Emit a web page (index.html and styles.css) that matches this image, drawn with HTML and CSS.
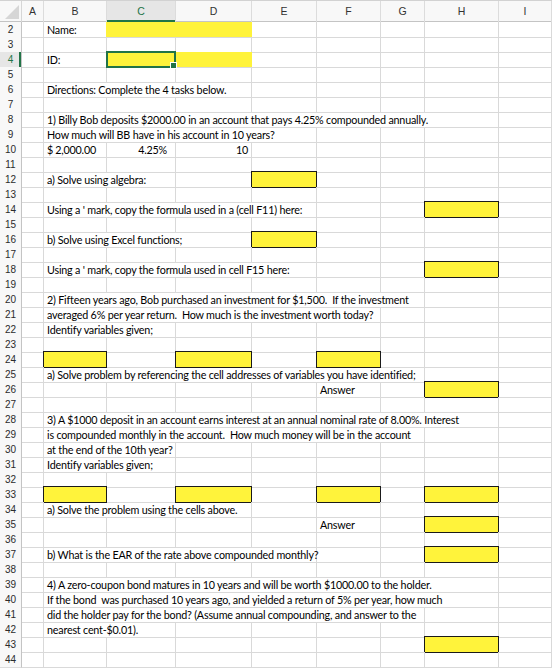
FILE: index.html
```html
<!DOCTYPE html>
<html>
<head>
<meta charset="utf-8">
<title>Sheet</title>
<link rel="stylesheet" href="styles.css">
</head>
<body>
<div class="sheet">
  <div class="colhead">
    <div class="corner"><svg width="22" height="21" viewBox="0 0 22 21"><polygon points="5,18 19,18 19,4" fill="#d6d6d6"/></svg></div>
    <div class="ch">A</div><div class="ch">B</div><div class="ch sel">C</div><div class="ch">D</div><div class="ch">E</div><div class="ch">F</div><div class="ch">G</div><div class="ch">H</div><div class="ch">I</div>
  </div>

  <div class="row"><div class="rh">2</div><div class="c"></div><div class="c t">Name:</div><div class="c fill s2"></div><div class="c"></div><div class="c"></div><div class="c"></div><div class="c"></div><div class="c"></div></div>
  <div class="row"><div class="rh">3</div><div class="c"></div><div class="c"></div><div class="c"></div><div class="c"></div><div class="c"></div><div class="c"></div><div class="c"></div><div class="c"></div><div class="c"></div></div>
  <div class="row"><div class="rh sel">4</div><div class="c"></div><div class="c t">ID:</div><div class="c fill active"></div><div class="c fill"></div><div class="c"></div><div class="c"></div><div class="c"></div><div class="c"></div><div class="c"></div></div>
  <div class="row"><div class="rh">5</div><div class="c"></div><div class="c"></div><div class="c"></div><div class="c"></div><div class="c"></div><div class="c"></div><div class="c"></div><div class="c"></div><div class="c"></div></div>
  <div class="row"><div class="rh">6</div><div class="c"></div><div class="c t s3">Directions: Complete the 4 tasks below.</div><div class="c"></div><div class="c"></div><div class="c"></div><div class="c"></div><div class="c"></div></div>
  <div class="row"><div class="rh">7</div><div class="c"></div><div class="c"></div><div class="c"></div><div class="c"></div><div class="c"></div><div class="c"></div><div class="c"></div><div class="c"></div><div class="c"></div></div>
  <div class="row"><div class="rh">8</div><div class="c"></div><div class="c t s7">1) Billy Bob deposits $2000.00 in an account that pays 4.25% compounded annually.</div><div class="c"></div></div>
  <div class="row"><div class="rh">9</div><div class="c"></div><div class="c t s4">How much will BB have in his account in 10 years?</div><div class="c"></div><div class="c"></div><div class="c"></div><div class="c"></div></div>
  <div class="row"><div class="rh">10</div><div class="c"></div><div class="c t acct"><span>$</span><span>2,000.00</span></div><div class="c t num pct">4.25%</div><div class="c t num">10</div><div class="c"></div><div class="c"></div><div class="c"></div><div class="c"></div><div class="c"></div></div>
  <div class="row"><div class="rh">11</div><div class="c"></div><div class="c"></div><div class="c"></div><div class="c"></div><div class="c"></div><div class="c"></div><div class="c"></div><div class="c"></div><div class="c"></div></div>
  <div class="row"><div class="rh">12</div><div class="c"></div><div class="c t s2">a) Solve using algebra:</div><div class="c"></div><div class="c box"></div><div class="c"></div><div class="c"></div><div class="c"></div><div class="c"></div></div>
  <div class="row"><div class="rh">13</div><div class="c"></div><div class="c"></div><div class="c"></div><div class="c"></div><div class="c"></div><div class="c"></div><div class="c"></div><div class="c"></div><div class="c"></div></div>
  <div class="row"><div class="rh">14</div><div class="c"></div><div class="c t s4">Using a ' mark, copy the formula used in a (cell F11) here:</div><div class="c"></div><div class="c"></div><div class="c box"></div><div class="c"></div></div>
  <div class="row"><div class="rh">15</div><div class="c"></div><div class="c"></div><div class="c"></div><div class="c"></div><div class="c"></div><div class="c"></div><div class="c"></div><div class="c"></div><div class="c"></div></div>
  <div class="row"><div class="rh">16</div><div class="c"></div><div class="c t s3">b) Solve using Excel functions;</div><div class="c box"></div><div class="c"></div><div class="c"></div><div class="c"></div><div class="c"></div></div>
  <div class="row"><div class="rh">17</div><div class="c"></div><div class="c"></div><div class="c"></div><div class="c"></div><div class="c"></div><div class="c"></div><div class="c"></div><div class="c"></div><div class="c"></div></div>
  <div class="row"><div class="rh">18</div><div class="c"></div><div class="c t s4">Using a ' mark, copy the formula used in cell F15 here:</div><div class="c"></div><div class="c"></div><div class="c box"></div><div class="c"></div></div>
  <div class="row"><div class="rh">19</div><div class="c"></div><div class="c"></div><div class="c"></div><div class="c"></div><div class="c"></div><div class="c"></div><div class="c"></div><div class="c"></div><div class="c"></div></div>
  <div class="row"><div class="rh">20</div><div class="c"></div><div class="c t s6">2) Fifteen years ago, Bob purchased an investment for $1,500.  If the investment</div><div class="c"></div><div class="c"></div></div>
  <div class="row"><div class="rh">21</div><div class="c"></div><div class="c t s5">averaged 6% per year return.  How much is the investment worth today?</div><div class="c"></div><div class="c"></div><div class="c"></div></div>
  <div class="row"><div class="rh">22</div><div class="c"></div><div class="c t s2">Identify variables given;</div><div class="c"></div><div class="c"></div><div class="c"></div><div class="c"></div><div class="c"></div><div class="c"></div></div>
  <div class="row"><div class="rh">23</div><div class="c"></div><div class="c"></div><div class="c"></div><div class="c"></div><div class="c"></div><div class="c"></div><div class="c"></div><div class="c"></div><div class="c"></div></div>
  <div class="row"><div class="rh">24</div><div class="c"></div><div class="c box"></div><div class="c"></div><div class="c box"></div><div class="c"></div><div class="c box"></div><div class="c"></div><div class="c"></div><div class="c"></div></div>
  <div class="row"><div class="rh">25</div><div class="c"></div><div class="c t s6">a) Solve problem by referencing the cell addresses of variables you have identified;</div><div class="c"></div><div class="c"></div></div>
  <div class="row"><div class="rh">26</div><div class="c"></div><div class="c"></div><div class="c"></div><div class="c"></div><div class="c"></div><div class="c t">Answer</div><div class="c"></div><div class="c box"></div><div class="c"></div></div>
  <div class="row"><div class="rh">27</div><div class="c"></div><div class="c"></div><div class="c"></div><div class="c"></div><div class="c"></div><div class="c"></div><div class="c"></div><div class="c"></div><div class="c"></div></div>
  <div class="row"><div class="rh">28</div><div class="c"></div><div class="c t s7">3) A $1000 deposit in an account earns interest at an annual nominal rate of 8.00%. Interest</div><div class="c"></div></div>
  <div class="row"><div class="rh">29</div><div class="c"></div><div class="c t s6">is compounded monthly in the account.  How much money will be in the account</div><div class="c"></div><div class="c"></div></div>
  <div class="row"><div class="rh">30</div><div class="c"></div><div class="c t s2">at the end of the 10th year?</div><div class="c"></div><div class="c"></div><div class="c"></div><div class="c"></div><div class="c"></div><div class="c"></div></div>
  <div class="row"><div class="rh">31</div><div class="c"></div><div class="c t s2">Identify variables given;</div><div class="c"></div><div class="c"></div><div class="c"></div><div class="c"></div><div class="c"></div><div class="c"></div></div>
  <div class="row"><div class="rh">32</div><div class="c"></div><div class="c"></div><div class="c"></div><div class="c"></div><div class="c"></div><div class="c"></div><div class="c"></div><div class="c"></div><div class="c"></div></div>
  <div class="row"><div class="rh">33</div><div class="c"></div><div class="c box"></div><div class="c"></div><div class="c box"></div><div class="c"></div><div class="c box"></div><div class="c"></div><div class="c box"></div><div class="c"></div></div>
  <div class="row"><div class="rh">34</div><div class="c"></div><div class="c t s3">a) Solve the problem using the cells above.</div><div class="c"></div><div class="c"></div><div class="c"></div><div class="c"></div><div class="c"></div></div>
  <div class="row"><div class="rh">35</div><div class="c"></div><div class="c"></div><div class="c"></div><div class="c"></div><div class="c"></div><div class="c t">Answer</div><div class="c"></div><div class="c box"></div><div class="c"></div></div>
  <div class="row"><div class="rh">36</div><div class="c"></div><div class="c"></div><div class="c"></div><div class="c"></div><div class="c"></div><div class="c"></div><div class="c"></div><div class="c"></div><div class="c"></div></div>
  <div class="row"><div class="rh">37</div><div class="c"></div><div class="c t s4">b) What is the EAR of the rate above compounded monthly?</div><div class="c"></div><div class="c"></div><div class="c box"></div><div class="c"></div></div>
  <div class="row"><div class="rh">38</div><div class="c"></div><div class="c"></div><div class="c"></div><div class="c"></div><div class="c"></div><div class="c"></div><div class="c"></div><div class="c"></div><div class="c"></div></div>
  <div class="row"><div class="rh">39</div><div class="c"></div><div class="c t s7">4) A zero-coupon bond matures in 10 years and will be worth $1000.00 to the holder.</div><div class="c"></div></div>
  <div class="row"><div class="rh">40</div><div class="c"></div><div class="c t s7">If the bond  was purchased 10 years ago, and yielded a return of 5% per year, how much</div><div class="c"></div></div>
  <div class="row"><div class="rh">41</div><div class="c"></div><div class="c t s6">did the holder pay for the bond? (Assume annual compounding, and answer to the</div><div class="c"></div><div class="c"></div></div>
  <div class="row"><div class="rh">42</div><div class="c"></div><div class="c t s2">nearest cent-$0.01).</div><div class="c"></div><div class="c"></div><div class="c"></div><div class="c"></div><div class="c"></div><div class="c"></div></div>
  <div class="row"><div class="rh">43</div><div class="c"></div><div class="c"></div><div class="c"></div><div class="c"></div><div class="c"></div><div class="c"></div><div class="c"></div><div class="c box"></div><div class="c"></div></div>
  <div class="row"><div class="rh">44</div><div class="c"></div><div class="c"></div><div class="c"></div><div class="c"></div><div class="c"></div><div class="c"></div><div class="c"></div><div class="c"></div><div class="c"></div></div>
</div>
</body>
</html>
```

FILE: styles.css
```css
* { box-sizing: border-box; }
html, body { margin: 0; padding: 0; background: #fff; }

.sheet {
  width: 552px;
  height: 668px;
  overflow: hidden;
  font-family: Lato, "Liberation Sans", sans-serif;
  color: #000;
}

.colhead, .row {
  display: grid;
  grid-template-columns: 22px 22px 63px 69px 76px 65px 64px 44px 74px 1fr;
}

.colhead {
  height: 22px;
  border-top: 1px solid #d2d2d2;
  border-bottom: 1px solid #c4c4c4;
  background: #f8f8f8;
}

.corner { border-right: 1px solid #d6d6d6; }
.corner svg { display: block; }

.ch {
  border-right: 1px solid #dcdcdc;
  text-align: center;
  font-family: "Liberation Sans", Arial, sans-serif;
  font-size: 10.5px;
  line-height: 20px;
  color: #333;
}
.ch.sel {
  background: #e6e6e6;
  color: #227447;
  box-shadow: inset 0 -2px 0 #227447;
}

.row { height: 15px; }

.rh {
  border-right: 1px solid #c4c4c4;
  border-bottom: 1px solid #dcdcdc;
  background: #f8f8f8;
  text-align: center;
  font-family: "Liberation Sans", Arial, sans-serif;
  font-size: 10px;
  line-height: 15px;
  color: #2b2b2b;
}
.rh.sel {
  background: #e6e6e6;
  color: #227447;
  box-shadow: inset -2px 0 0 #227447;
}

.c {
  border-right: 1px solid #d9d9d9;
  border-bottom: 1px solid #d9d9d9;
  min-width: 0;
}

.t {
  font-size: 10.75px;
  line-height: 15px;
  padding-left: 3px;
  white-space: pre;
  letter-spacing: -0.2px;
}

.s2 { grid-column: span 2; }
.s3 { grid-column: span 3; }
.s4 { grid-column: span 4; }
.s5 { grid-column: span 5; }
.s6 { grid-column: span 6; }
.s7 { grid-column: span 7; }

.num { text-align: right; padding-right: 3px; }
.pct { padding-right: 8px; }

.acct {
  display: flex;
  justify-content: space-between;
  padding-right: 10px;
}

.fill {
  background: #fff33b;
  border-right-color: #fff33b;
  margin-left: -1px;
}

.box {
  background: #fff33b;
  border: 1px solid #1a1a1a;
  margin: -1px 0 0 -1px;
}

.active {
  position: relative;
  border: 2px solid #227447;
  margin: -1px 0 0 -1px;
}
.active::after {
  content: "";
  position: absolute;
  right: -3px;
  bottom: -3px;
  width: 5px;
  height: 5px;
  background: #227447;
  border: 1px solid #fff;
}
```
